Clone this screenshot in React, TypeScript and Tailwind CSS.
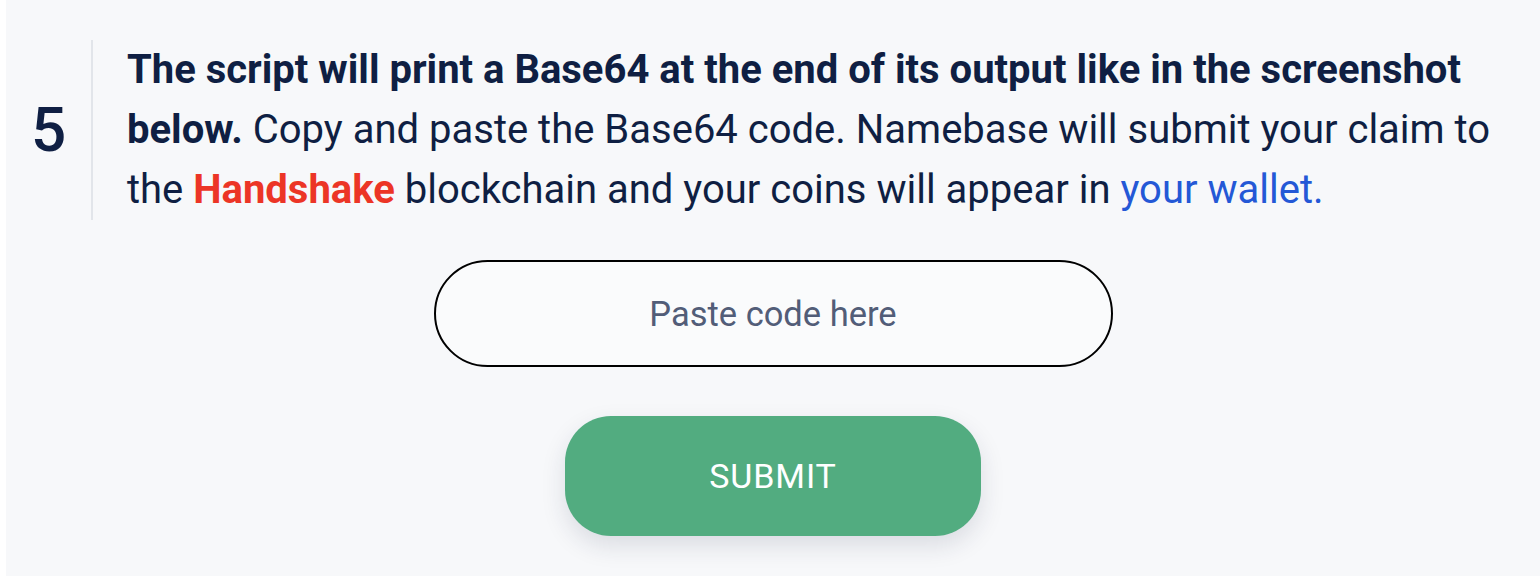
export default function App() {
  return (
    <div className="w-full h-[576px] bg-white flex font-['Roboto',sans-serif]">
      <div className="ml-[6px] flex-1 bg-[#f7f8fa] pt-[40px] flex flex-col">
        {/* step row */}
        <div className="flex">
          <div className="w-[85px] shrink-0 flex items-center justify-center text-[62px] leading-none font-medium text-[#0f1f43]">
            5
          </div>
          <div className="flex-1 border-l-2 border-[#e2e5ea] pl-[34px] pr-[40px] text-[40px] leading-[60px] text-[#0f1f43]">
            <b className="font-bold">
              The script will print a Base64 at the end of its output like in the screenshot below.
            </b>{" "}
            Copy and paste the Base64 code. Namebase will submit your claim to the{" "}
            <span className="font-bold text-[#ec3526]">Handshake</span> blockchain and your coins will appear in{" "}
            <a href="#" className="text-[#2458d6]">
              your wallet.
            </a>
          </div>
        </div>

        {/* form */}
        <div className="flex flex-col items-center">
          <input
            placeholder="Paste code here"
            className="mt-[40px] w-[679px] h-[107px] rounded-full border-2 border-black bg-[#fafbfc] text-center text-[34.5px] text-[#0f1f43] placeholder:text-[#525d78] outline-none"
          />
          <button className="mt-[49px] w-[416px] h-[120px] rounded-[46px] bg-[#52ac80] text-white text-[34px] tracking-[0.9px] shadow-[0_10px_24px_rgba(30,40,70,0.13)]">
            SUBMIT
          </button>
        </div>
      </div>
    </div>
  );
}
